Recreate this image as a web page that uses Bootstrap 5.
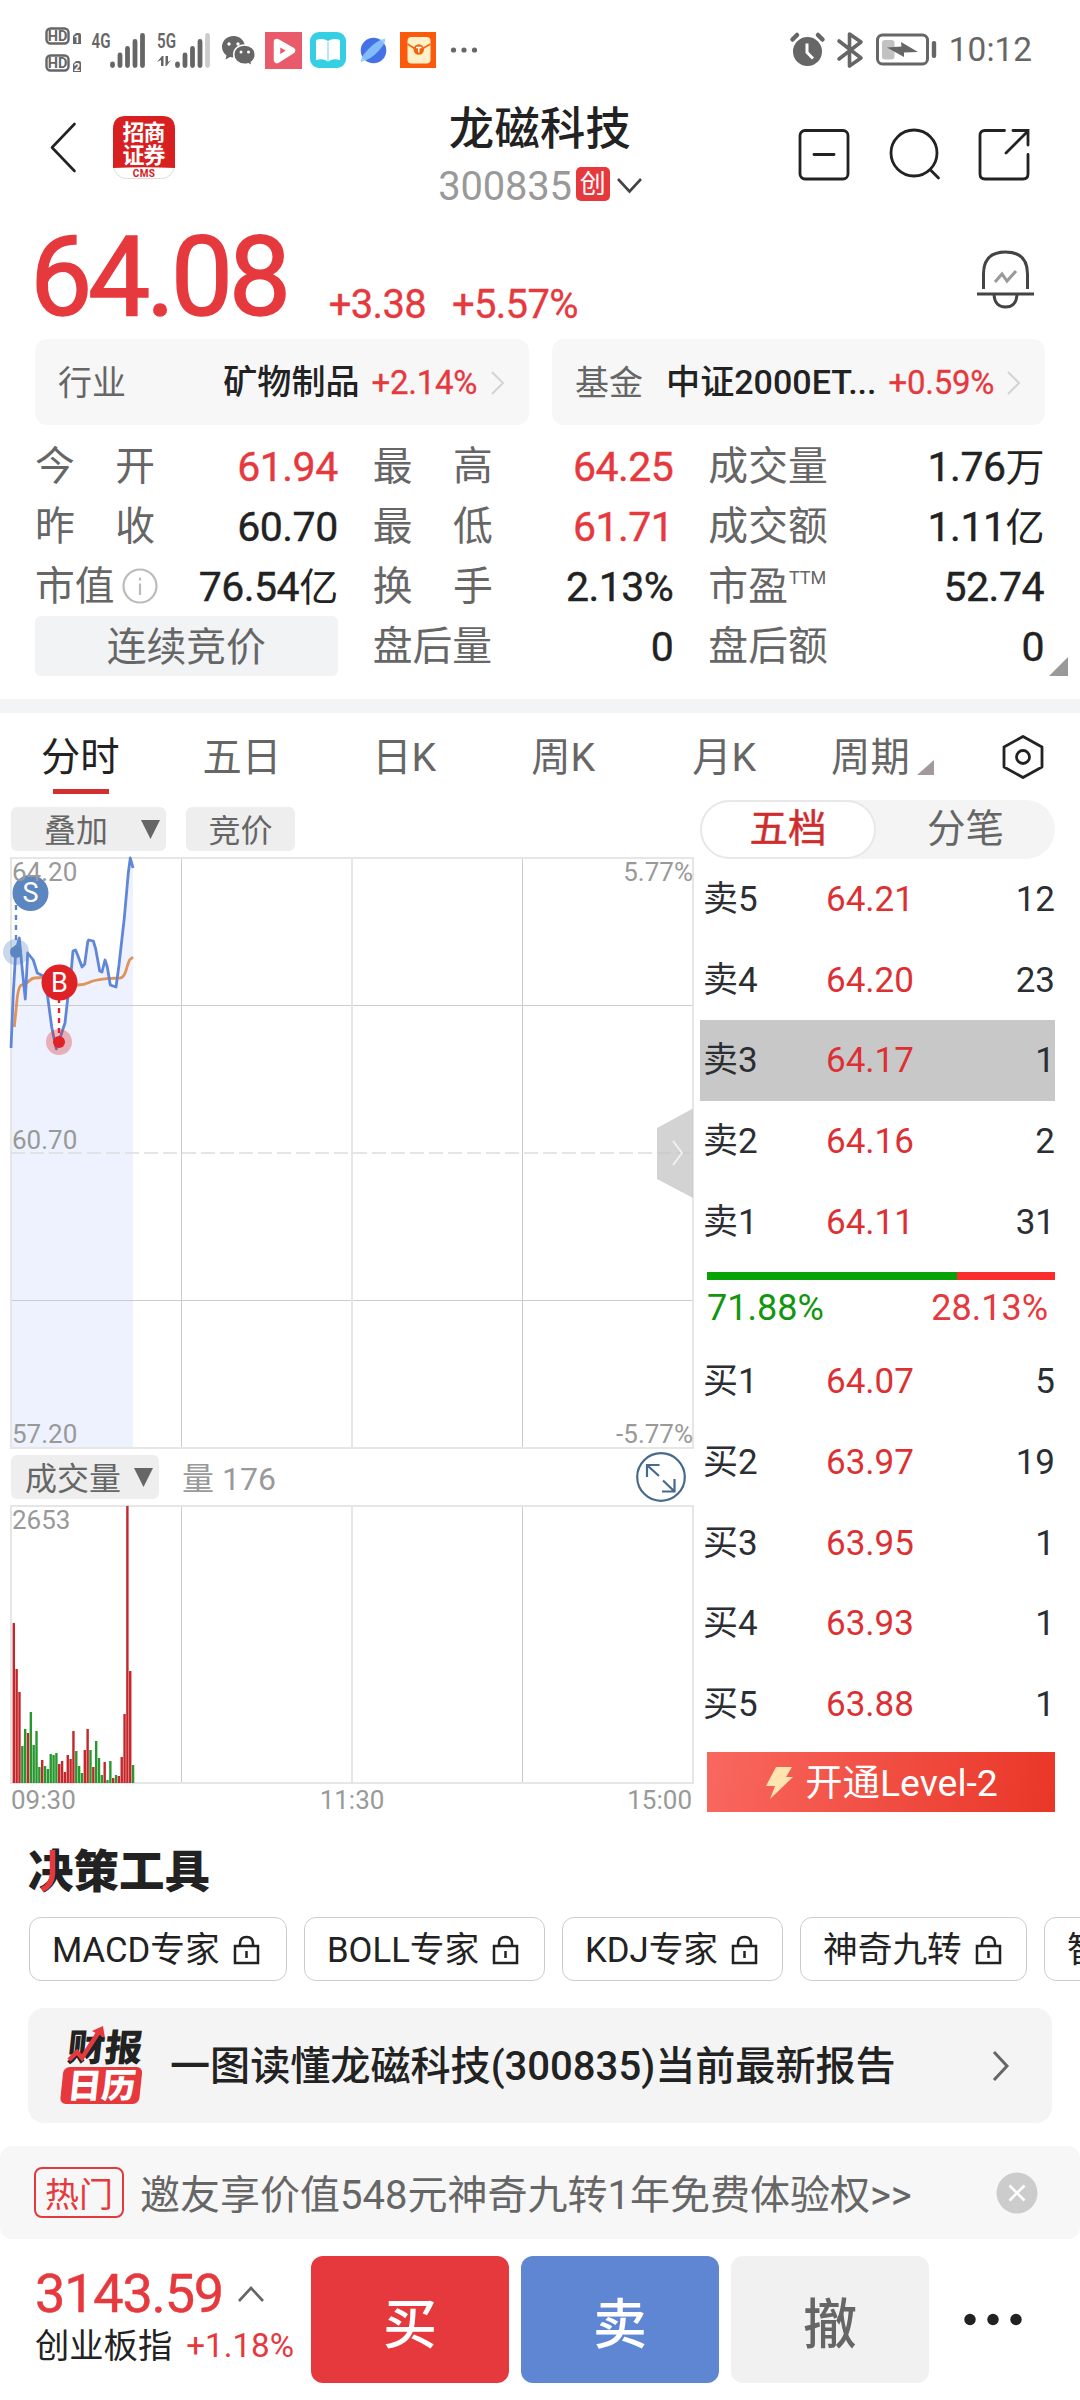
<!DOCTYPE html>
<html lang="zh-CN">
<head>
<meta charset="utf-8">
<meta name="viewport" content="width=device-width, initial-scale=1">
<title>龙磁科技 300835</title>
<link href="https://cdn.jsdelivr.net/npm/bootstrap@5.3.0/dist/css/bootstrap.min.css" rel="stylesheet">
<style>
:root{--up:#e6393e;--ink:#222;--soft:#666;--pale:#999}
body{width:1080px;height:2400px;overflow:hidden;background:#fff;color:var(--ink);font-family:Roboto,"Noto Sans CJK SC",sans-serif;line-height:1}
svg{display:block;flex:none;overflow:visible}
svg text{font-family:Roboto,"Noto Sans CJK SC",sans-serif}
.up{color:var(--up)}
.soft{color:var(--soft)}
.nw{white-space:nowrap}
.status{height:100px}
.clock{font-size:33.4px;color:#666;margin:0 48px 0 9px}
.head{height:120px;padding:0 50px 0 51px}
.head-left,.head-right{width:290px}
.stock-name{font-size:45.3px;font-weight:500;letter-spacing:.3px;height:59px;margin-left:-1px}
.stock-code{font-size:39.9px;color:var(--pale);letter-spacing:-.2px}
.board-tag{width:34px;height:34px;border-radius:5px;background:var(--up);color:#fff;font-size:26px;margin:-2px 6px 0 4px}
.quote{height:119px;padding:0 46px 0 30px}
.price{font-size:111px;font-weight:400;-webkit-text-stroke:1.4px var(--up);letter-spacing:-4.4px;line-height:80px;padding-top:17px}
.delta{font-size:40px;letter-spacing:-.7px;line-height:30px;-webkit-text-stroke:.3px var(--up);padding-top:70px}
.peer{height:86px;background:#f7f7f7;border-radius:12px;font-size:34px;padding:1px 23px 0}
.peer b{font-weight:500;font-size:34.1px}
.peer .pct{font-size:33px;letter-spacing:-.3px;-webkit-text-stroke:.3px var(--up)}
.facts{padding:11px 36px 0 35px;height:274px;gap:35px}
.facts .fcol1{width:303px}.facts .fcol2{width:301px}.facts .fcol3{width:336px}
.fact{height:60px;font-size:39.8px;padding-top:2px}
.fact .val{font-size:41px;letter-spacing:-.5px;-webkit-text-stroke:.4px currentColor}
.fact .val .cj{font-size:39px;-webkit-text-stroke:0}
.spread{width:120px}
.phase{height:60px;background:#f2f3f5;border-radius:6px;font-size:39.8px;color:var(--soft);padding-top:4px}
.gap-band{height:14px;background:#f3f4f6}
.periods{height:88px;font-size:39.3px;color:var(--soft);padding-left:41px}
.periods>span{padding-top:3px}
.periods .on{color:#222;position:relative}
.periods .on::after{content:"";position:absolute;left:12px;bottom:-16px;width:56px;height:5px;background:#d32f2f}
.tool{height:44px;background:#eee;border-radius:6px;font-size:32px;color:var(--soft)}
.tool span{padding-top:3px}
.left-col{width:694px;padding-left:11px}
.right-col{width:355px;margin-left:6px;margin-top:-1px}
.seg{height:59px;background:#f4f4f4;border-radius:30px;font-size:38.5px;color:var(--soft)}
.seg .seg-on{width:176px;height:59px;border:2px solid #e8e8e8;border-radius:30px;background:#fff;color:#d02c2c;-webkit-text-stroke:.5px #d02c2c}
.lvl{height:80.7px;font-size:35px;color:#2b2e33}
.lvl .who{width:123px;padding-left:3px;font-size:35px}
.lvl .at{flex:1;color:#dd3033;padding-left:3px}
.lvl.hit{background:#c8c8c8}
.bidask{height:8px;margin:10px 0 0 7px;background:#fb2c2c}
.bidask div{background:#06a206}
.pcts{font-size:36px;height:53px;padding:3px 7px 0}
.l2{height:60px;margin:7px 0 0 7px;gap:12px;padding:3px 0 0 2px;color:#fff;font-size:37.4px;background:linear-gradient(100deg,#f9685f,#e93627)}
.tools-title{font-size:45.5px;font-weight:900;height:104px;padding:16px 0 0 28px;position:relative}
.tools-title svg{position:absolute;left:39px;top:34px}
.expert{height:64px;border:1.5px solid #ccc;border-radius:12px;font-size:34.7px;padding:2px 25px 0 22px;gap:13px;flex:none}
.report{margin:27px 28px 0;height:115px;background:#f4f4f4;border-radius:16px;padding:0 42px 0 35px}
.report .ttl{font-size:40.1px;font-weight:500;margin-left:25px;padding-top:4px}
.promo{margin-top:23px;height:93px;background:#f7f7f7;border-radius:12px;padding:0 42px 0 34px}
.hot{width:90px;height:51px;border:2px solid var(--up);border-radius:8px;color:var(--up);font-size:34px;padding-top:4px}
.promo .msg{font-size:40px;color:var(--soft);margin-left:16px;padding-top:6px}
.dock{height:161px;padding:17px 35px 0}
.dock .idx{width:276px}
.idx .pts{font-size:54px;letter-spacing:-1.2px;line-height:54px;-webkit-text-stroke:.5px var(--up);padding-top:11px}
.idx .nm{font-size:34.3px;margin-top:8px;height:34px}
.trade{width:198px;height:127px;border-radius:12px;font-size:54px;font-weight:500;border:0;color:#fff;margin-right:12px;flex:none;padding:12px 0 0}
.trade.cancel{color:#666}
</style>
</head>
<body>
<div class="status d-flex align-items-start justify-content-between">
  <svg width="500" height="100" viewBox="0 0 500 100" fill="#666">
    <rect x="46.500" y="28.500" width="22" height="15" rx="4" fill="none" stroke="#666" stroke-width="2.400"/>
    <rect x="46.500" y="55.500" width="22" height="15" rx="4" fill="none" stroke="#666" stroke-width="2.400"/>
    <text x="57.500" y="41" font-size="14.500" font-weight="700" text-anchor="middle">HD</text>
    <text x="57.500" y="68" font-size="14.500" font-weight="700" text-anchor="middle">HD</text>
    <path d="M76 33h3q2 0 2 2v9h-8v-8z"/><path d="M76 61h3q2 0 2 2v9h-8v-8z"/>
    <text x="77" y="43" font-size="11" font-weight="700" fill="#fff" text-anchor="middle">1</text>
    <text x="77" y="71" font-size="11" font-weight="700" fill="#fff" text-anchor="middle">2</text>
    <text x="91.500" y="48" font-size="21" font-weight="600" textLength="19" lengthAdjust="spacingAndGlyphs">4G</text>
    <text x="157" y="48" font-size="21" font-weight="600" textLength="19" lengthAdjust="spacingAndGlyphs">5G</text>
    <g stroke="#666" stroke-width="4.800" stroke-linecap="round">
      <path d="M112.500 64v1.500M120 55V65.500M127.500 48.500V65.500M135 41.500V65.500M142.500 35.500V65.500"/>
      <path d="M177.500 64v1.500M185 55V65.500M192.500 48.500V65.500M200 41.500V65.500"/><path d="M207.500 35.500V65.500" stroke="#ccc"/>
    </g>
    <path d="M157 62l5-6h1.500v10h-2.500v-6zM171 60l-4.500 6h-1V56h2.500v6z"/>
    <path d="M233.500 36c-7 0-11.500 5-11.500 11 0 3.500 1.800 6.500 4.500 8.500l-1 4 4.500-2.500c1.200.3 2.300.5 3.500.5 7 0 11.500-5 11.500-10.500S240.500 36 233.500 36z"/>
    <path d="M244.500 45c-6.500 0-10.800 4.300-10.800 9.500s4.300 9.800 10.800 9.800c1.300 0 2.600-.2 3.800-.6l4 2.300-1-3.700c2.400-1.800 4-4.500 4-7.800 0-5.200-4.300-9.500-10.800-9.500z" stroke="#fff" stroke-width="1.500"/>
    <g fill="#fff"><circle cx="229" cy="44" r="1.700"/><circle cx="238" cy="44" r="1.700"/><circle cx="241" cy="52" r="1.500"/><circle cx="248.500" cy="52" r="1.500"/></g>
    <rect x="265" y="32" width="37" height="37" fill="#e95b6a"/>
    <path d="M277 42l15 8.500L277 60z" fill="#e95b6a" stroke="#fff" stroke-width="6.500" stroke-linejoin="round"/>
    <rect x="310" y="32" width="36" height="36" rx="9" fill="#35cfe3"/>
    <path d="M316 40q7-2.500 12 1 5-3.500 12-1v20q-7-2-12 1.500-5-3.500-12-1.500z" fill="#fff"/><path d="M328 42v19" stroke="#9be5ef" stroke-width="1.500"/>
    <circle cx="373.500" cy="50.500" r="12.800" fill="#4472e6"/>
    <path d="M361 62q-2-3 7-12.500T385 38.500q2 3-6 12T361 62z" fill="#8ec9fb" opacity=".85"/>
    <rect x="400" y="32" width="36" height="36" fill="#fb5a0d"/><rect x="407.500" y="37" width="23" height="26.500" rx="4" fill="#fff0c8"/>
    <path d="M407.500 44l11 7 12-7" fill="none" stroke="#f0690f" stroke-width="1.500"/><circle cx="418.800" cy="49.500" r="5.200" fill="#f0640d"/>
    <path d="M416 47.500h5.600M418.800 47.500v5" stroke="#fff" stroke-width="1.400"/>
    <circle cx="453.500" cy="50" r="2.600"/><circle cx="464" cy="50" r="2.600"/><circle cx="474.500" cy="50" r="2.600"/>
  </svg>
  <div class="d-flex align-items-center" style="height:100px">
    <svg width="150" height="100" viewBox="791 0 150 100" fill="#666">
      <circle cx="808.500" cy="51.500" r="14.500"/><path d="M808 43.500v9l6 6" fill="none" stroke="#fff" stroke-width="3"/>
      <path d="M793.500 39.500l4.500-4.500M823.500 39.500l-4.500-4.500" stroke="#666" stroke-width="4.500" stroke-linecap="round"/>
      <path d="M840 41l22 17-11.500 8V34l11.500 8-22 17" fill="none" stroke="#666" stroke-width="3.600" stroke-linejoin="round" stroke-linecap="round"/>
      <rect x="878.500" y="35" width="50" height="29" rx="5" fill="none" stroke="#666" stroke-width="3"/>
      <rect x="883" y="40" width="12.500" height="19.500" rx="3" fill="#c2c2c2"/>
      <path d="M888 47.500l14.500-1-.5-4.500 17 10-14 .5 0 4.500z"/><rect x="932.800" y="41" width="4.400" height="17" rx="2"/>
    </svg>
    <span class="clock">10:12</span>
  </div>
</div>

<header class="head d-flex justify-content-between">
  <div class="head-left d-flex pt-3">
    <svg width="26" height="62" viewBox="51 116 26 62"><path d="M74.500 124L52 147.500 74.500 171" fill="none" stroke="#222" stroke-width="2.600" stroke-linecap="round" stroke-linejoin="round"/></svg>
    <svg style="margin-left:36px" width="62" height="63" viewBox="0 0 62 63">
      <rect x=".5" y=".5" width="61" height="62" rx="13" fill="#fff" stroke="#ddd"/><path d="M0 52V13Q0 0 13 0h36q13 0 13 13v39q-31-1.500-62 0z" fill="#d7201f"/>
      <g fill="#fff" font-size="22" font-weight="700" text-anchor="middle"><text x="31" y="24" textLength="43">招商</text><text x="31" y="46.500" textLength="43">证券</text></g>
      <text x="31" y="61" font-size="10" font-weight="700" text-anchor="middle" fill="#d7201f" letter-spacing=".3">CMS</text>
    </svg>
  </div>
  <div class="d-flex flex-column align-items-center nw">
    <div class="stock-name d-flex align-items-center">龙磁科技</div>
    <div class="d-flex align-items-center" style="height:51px">
      <span class="stock-code pt-1">300835</span>
      <span class="board-tag d-flex align-items-center justify-content-center">创</span>
      <svg width="27" height="18" viewBox="0 0 27 18"><path d="M2 3l11.500 12.500L25 3" fill="none" stroke="#444" stroke-width="2.600"/></svg>
    </div>
  </div>
  <div class="head-right d-flex justify-content-end" style="padding-top:28px;gap:37px">
    <svg width="52" height="54" viewBox="0 0 52 54" fill="none" stroke="#222" stroke-width="2.800" stroke-linecap="round"><rect x="2" y="2.500" width="48" height="48.500" rx="5"/><path d="M16 26.500h20"/></svg>
    <svg style="margin-left:2px" width="52" height="54" viewBox="0 0 52 54" fill="none" stroke="#222" stroke-width="2.800" stroke-linecap="round"><circle cx="25" cy="25" r="23"/><path d="M41.500 42l8 8"/></svg>
    <svg width="52" height="54" viewBox="0 0 52 54" fill="none" stroke="#222" stroke-width="2.800" stroke-linecap="round"><path d="M26.500 2.500H7q-5 0-5 5V46q0 5 5 5h38q5 0 5-5V26.500M35 2.500h15V17M49 4L28 25"/></svg>
  </div>
</header>

<section class="quote d-flex align-items-start">
  <span class="price up">64.08</span>
  <span class="delta up nw" style="margin-left:42px">+3.38</span>
  <span class="delta up nw" style="margin-left:26px">+5.57%</span>
  <svg class="ms-auto" style="margin-top:30px" width="58" height="60" viewBox="0 0 58 60" fill="none" stroke="#444" stroke-width="3"><path d="M7.500 39V24Q7.500 2 29.500 2t22 22v15M1 44h57"/><path d="M18 45q1 12 11.500 12T41 45"/><path d="M19 32l7-8 5 7 9-10" stroke="#999"/></svg>
</section>

<div class="d-flex" style="padding:0 35px;gap:23px">
  <div class="peer d-flex align-items-center flex-fill nw" style="width:494px">
    <span class="soft">行业</span><b class="ms-auto">矿物制品</b><span class="pct up" style="margin:0 13px 0 12px">+2.14%</span>
    <svg width="16" height="26" viewBox="0 0 16 26"><path d="M2 2l11 11L2 24" fill="none" stroke="#d4d4d4" stroke-width="2"/></svg>
  </div>
  <div class="peer d-flex align-items-center flex-fill nw" style="width:493px">
    <span class="soft">基金</span><b class="ms-auto">中证2000ET...</b><span class="pct up" style="margin:0 12px 0 12px">+0.59%</span>
    <svg width="16" height="26" viewBox="0 0 16 26"><path d="M2 2l11 11L2 24" fill="none" stroke="#d4d4d4" stroke-width="2"/></svg>
  </div>
</div>

<section class="facts d-flex position-relative nw">
  <div class="fcol1">
    <div class="fact d-flex align-items-center justify-content-between"><span class="soft spread d-flex justify-content-between"><i class="fst-normal">今</i><i class="fst-normal">开</i></span><span class="val up">61.94</span></div>
    <div class="fact d-flex align-items-center justify-content-between"><span class="soft spread d-flex justify-content-between"><i class="fst-normal">昨</i><i class="fst-normal">收</i></span><span class="val">60.70</span></div>
    <div class="fact d-flex align-items-center"><span class="soft">市值</span>
      <svg style="margin-left:7px" width="36" height="36" viewBox="0 0 36 36" fill="none" stroke="#bbb" stroke-width="2.200"><circle cx="18" cy="17" r="16.500"/><path d="M18 14.500V26M18 8.500v3"/></svg>
      <span class="val ms-auto">76.54<span class="cj">亿</span></span></div>
    <div class="phase d-flex align-items-center justify-content-center">连续竞价</div>
  </div>
  <div class="fcol2">
    <div class="fact d-flex align-items-center justify-content-between"><span class="soft spread d-flex justify-content-between"><i class="fst-normal">最</i><i class="fst-normal">高</i></span><span class="val up">64.25</span></div>
    <div class="fact d-flex align-items-center justify-content-between"><span class="soft spread d-flex justify-content-between"><i class="fst-normal">最</i><i class="fst-normal">低</i></span><span class="val up">61.71</span></div>
    <div class="fact d-flex align-items-center justify-content-between"><span class="soft spread d-flex justify-content-between"><i class="fst-normal">换</i><i class="fst-normal">手</i></span><span class="val">2.13%</span></div>
    <div class="fact d-flex align-items-center justify-content-between"><span class="soft">盘后量</span><span class="val">0</span></div>
  </div>
  <div class="fcol3">
    <div class="fact d-flex align-items-center justify-content-between"><span class="soft">成交量</span><span class="val">1.76<span class="cj">万</span></span></div>
    <div class="fact d-flex align-items-center justify-content-between"><span class="soft">成交额</span><span class="val">1.11<span class="cj">亿</span></span></div>
    <div class="fact d-flex align-items-center justify-content-between"><span class="soft d-flex">市盈<span style="font-size:18px;padding-top:2px;margin-left:1px">TTM</span></span><span class="val">52.74</span></div>
    <div class="fact d-flex align-items-center justify-content-between"><span class="soft">盘后额</span><span class="val">0</span></div>
  </div>
  <svg class="position-absolute" style="right:12px;bottom:23px" width="19" height="19" viewBox="0 0 19 19"><path d="M0 19L19 0v19z" fill="#999"/></svg>
</section>
<div class="gap-band"></div>

<nav class="periods d-flex align-items-center nw">
  <span class="on">分时</span><span style="margin-left:83px">五日</span><span style="margin-left:91px">日K</span><span style="margin-left:95px">周K</span><span style="margin-left:97px">月K</span>
  <span class="d-flex align-items-end" style="margin-left:75px">周期<svg style="margin:0 0 3px 7px" width="17" height="15" viewBox="0 0 17 15"><path d="M0 15L17 0v15z" fill="#a09a9a"/></svg></span>
  <svg class="ms-auto" style="margin-right:36px" width="42" height="46" viewBox="0 0 42 46" fill="none" stroke="#222" stroke-width="2.800" stroke-linejoin="round"><path d="M21 2.500l19 10.500v20L21 43.500 2 33V13z"/><circle cx="21" cy="23" r="6.500"/></svg>
</nav>

<main class="d-flex">
  <div class="left-col">
    <div class="d-flex" style="padding-top:6px;height:56px;gap:20px">
      <div class="tool d-flex align-items-center justify-content-between" style="width:155px;padding:0 6px 0 33px"><span>叠加</span><svg width="19" height="19" viewBox="0 0 19 19"><path d="M0 0h19l-9.500 19z" fill="#666"/></svg></div>
      <div class="tool d-flex align-items-center justify-content-center" style="width:109px"><span>竞价</span></div>
    </div>
    <svg width="694" height="592" viewBox="0 857 694 592" style="margin-left:-11px">
      <path d="M11 1048L13.300 993 15.700 952 19.300 938 22 967 25.300 999 27.700 953 33.300 960 37.300 973 43.300 976 47.700 997 51.700 1027 56.300 1049 65 1023 68.300 993 71 973 73 951 78 956 82 967 84.700 964 87.700 942 93.300 941 95.700 949 99.700 971 102 972 105 960 107.300 967 110.300 985 116 987 119 965 124.300 918 128.300 873 130.300 858 133 868V1448H11z" fill="#edf2fe"/>
      <g fill="none" stroke-width="1" stroke="#ccc"><path d="M181.500 858v590M522.500 858v590M11 1005.500h682M11 1300.500h682"/><path d="M352 858v590M11 858h682v590H11z" stroke="#e6e6e6" stroke-width="2"/><path d="M11 1153h682" stroke="#ddd" stroke-width="1.600" stroke-dasharray="14 5"/></g>
      <path d="M14.300 1027l2.400-24q1.300-15 4-17.500l6.600-3q4-4 7-4.500l9-.500Q55 981 62 985h16q6 0 11-2.500t18-3.800l13-.700q4-.500 6-7.500t3.500-10.500l3.500-3" fill="none" stroke="#e0935a" stroke-width="2.800"/>
      <path d="M11 1048L13.300 993 15.700 952 19.300 938 22 967 25.300 999 27.700 953 33.300 960 37.300 973 43.300 976 47.700 997 51.700 1027 56.300 1049 65 1023 68.300 993 71 973 73 951 75.500 950 78 956 82 967 84.700 964 87.700 942 88.700 940 93.300 941 95.700 949 99.700 971 102 972 105 960 107.300 967 110.300 985 116 987 119 965 124.300 918 128.300 873 130.300 858 133 868" fill="none" stroke="#5f86d8" stroke-width="2.800" stroke-linejoin="round"/>
      <path d="M16 905v45" stroke="#5b86c0" stroke-width="2.400" stroke-dasharray="5 5"/>
      <circle cx="16" cy="952" r="13" fill="#5b86c0" opacity=".32"/><circle cx="16" cy="952" r="6" fill="#5b86c0"/>
      <circle cx="30.500" cy="893" r="18" fill="#5b86c0"/><text x="30.500" y="902" font-size="27" fill="#fff" text-anchor="middle">S</text>
      <path d="M59 998v44" stroke="#de2226" stroke-width="2.400" stroke-dasharray="5 5"/>
      <circle cx="59" cy="1042" r="13" fill="#de2226" opacity=".32"/><circle cx="59" cy="1042" r="6" fill="#de2226"/>
      <circle cx="59.500" cy="982.500" r="18" fill="#de2226"/><text x="59.500" y="992" font-size="27" fill="#fff" text-anchor="middle">B</text>
      <g font-size="26" fill="#999"><text x="12" y="881">64.20</text><text x="12" y="1148.500">60.70</text><text x="12" y="1443">57.20</text><text x="693" y="881" text-anchor="end">5.77%</text><text x="693" y="1443" text-anchor="end">-5.77%</text></g>
      <path d="M693 1108.500L657 1128v51l36 19z" fill="#c4c4c4" opacity=".75"/><path d="M673 1141l9 12-9 12" fill="none" stroke="#f2f2f2" stroke-width="1.800"/>
    </svg>
    <div class="d-flex align-items-center" style="height:56px">
      <div class="tool d-flex align-items-center justify-content-between" style="width:148px;padding:0 6px 0 14px"><span>成交量</span><svg width="19" height="19" viewBox="0 0 19 19"><path d="M0 0h19l-9.500 19z" fill="#666"/></svg></div>
      <span style="font-size:32px;color:#999;margin-left:23px;padding-top:3px">量 176</span>
      <svg class="ms-auto" style="margin-right:8px" width="50" height="50" viewBox="0 0 50 50" fill="none" stroke="#47698c" stroke-width="2.200"><circle cx="25" cy="25" r="23.800"/><path d="M23 24L11.500 13.500M11 25V13h12.500M27 28.500L38 39M38.500 27v12.500H26"/></svg>
    </div>
    <svg width="694" height="308" viewBox="0 1505 694 308" style="margin-left:-11px">
      <g fill="none" stroke-width="1" stroke="#ccc"><path d="M181.500 1506v277M522.500 1506v277"/><path d="M352 1506v277M11 1506h682v277H11z" stroke="#e6e6e6" stroke-width="2"/></g>
      <g id="volume"></g>
      <g font-size="26" fill="#999"><text x="12" y="1529">2653</text><text x="11" y="1808.500">09:30</text><text x="352" y="1808.500" text-anchor="middle">11:30</text><text x="692" y="1808.500" text-anchor="end">15:00</text></g>
    </svg>
  </div>
  <div class="right-col nw">
    <div class="seg d-flex align-items-center"><span class="seg-on d-flex align-items-center justify-content-center">五档</span><span class="flex-fill text-center">分笔</span></div>
    <div class="lvl d-flex align-items-center"><span class="who">卖5</span><span class="at">64.21</span><span>12</span></div>
    <div class="lvl d-flex align-items-center"><span class="who">卖4</span><span class="at">64.20</span><span>23</span></div>
    <div class="lvl hit d-flex align-items-center"><span class="who">卖3</span><span class="at">64.17</span><span>1</span></div>
    <div class="lvl d-flex align-items-center"><span class="who">卖2</span><span class="at">64.16</span><span>2</span></div>
    <div class="lvl d-flex align-items-center"><span class="who">卖1</span><span class="at">64.11</span><span>31</span></div>
    <div class="bidask d-flex"><div style="width:71.88%"></div></div>
    <div class="pcts d-flex align-items-center justify-content-between"><span style="color:#12960f">71.88%</span><span class="up">28.13%</span></div>
    <div style="padding-top:8px">
    <div class="lvl d-flex align-items-center"><span class="who">买1</span><span class="at">64.07</span><span>5</span></div>
    <div class="lvl d-flex align-items-center"><span class="who">买2</span><span class="at">63.97</span><span>19</span></div>
    <div class="lvl d-flex align-items-center"><span class="who">买3</span><span class="at">63.95</span><span>1</span></div>
    <div class="lvl d-flex align-items-center"><span class="who">买4</span><span class="at">63.93</span><span>1</span></div>
    <div class="lvl d-flex align-items-center"><span class="who">买5</span><span class="at">63.88</span><span>1</span></div>
    </div>
    <div class="l2 d-flex align-items-center justify-content-center">
      <svg width="27" height="32" viewBox="0 0 27 32"><path d="M10 0h16l-6 10h7L4 32l5-13H0z" fill="#ffe3b0"/></svg>开通Level-2
    </div>
  </div>
</main>

<section>
  <div class="tools-title d-flex align-items-center">决策工具<svg width="24" height="50" viewBox="0 0 24 50"><path d="M13.500 3v24Q13 38 3 43" fill="none" stroke="#e6393e" stroke-width="5.500"/></svg></div>
  <div class="d-flex nw overflow-hidden" id="experts" style="padding-left:29px;gap:17px">
    <div class="expert d-flex align-items-center" style="width:258px">MACD专家<svg width="27" height="30"><use href="#lock"/></svg></div>
    <div class="expert d-flex align-items-center" style="width:241px">BOLL专家<svg width="27" height="30"><use href="#lock"/></svg></div>
    <div class="expert d-flex align-items-center" style="width:221px">KDJ专家<svg width="27" height="30"><use href="#lock"/></svg></div>
    <div class="expert d-flex align-items-center" style="width:227px">神奇九转<svg width="27" height="30"><use href="#lock"/></svg></div>
    <div class="expert d-flex align-items-center" style="width:227px">智能选股</div>
  </div>
  <svg class="d-none"><symbol id="lock" viewBox="0 0 27 30"><path d="M2 11h23v17H2zM7 11V8.500Q7 2 13.500 2T20 8.500V11M13.500 16v7" fill="none" stroke="#222" stroke-width="2.500"/></symbol></svg>
  <div class="report d-flex align-items-center nw">
    <svg width="82" height="80" viewBox="0 0 82 80">
      <g transform="skewX(-6)" font-weight="900"><text x="7" y="35" font-size="37" textLength="75" lengthAdjust="spacingAndGlyphs" fill="#222">财报</text>
      <rect x="5" y="41" width="79" height="37" rx="6" fill="#e6393e"/><text x="11" y="72" font-size="34" textLength="68" lengthAdjust="spacingAndGlyphs" fill="#fff">日历</text></g>
      <path d="M6 34l8-8 5 6L37 4" fill="none" stroke="#e6393e" stroke-width="4.500"/><path d="M29 5l11-5 2 12z" fill="#e6393e"/>
    </svg>
    <span class="ttl">一图读懂龙磁科技(300835)当前最新报告</span>
    <svg class="ms-auto" width="18" height="32" viewBox="0 0 18 32"><path d="M2 2l13 14L2 30" fill="none" stroke="#666" stroke-width="3"/></svg>
  </div>
  <div class="promo d-flex align-items-center nw">
    <span class="hot d-flex align-items-center justify-content-center">热门</span><span class="msg">邀友享价值548元神奇九转1年免费体验权&gt;&gt;</span>
    <svg class="ms-auto" width="42" height="42" viewBox="0 0 42 42"><circle cx="21" cy="21" r="20.500" fill="#ccc"/><path d="M13.500 13.500l15 15M28.500 13.500l-15 15" stroke="#fff" stroke-width="2.600"/></svg>
  </div>
</section>

<footer class="dock d-flex align-items-start nw">
  <div class="idx">
    <div class="d-flex align-items-center up pts">3143.59<svg style="margin-left:14px" width="28" height="18" viewBox="0 0 28 18"><path d="M2 16L14 3l12 13" fill="none" stroke="#666" stroke-width="2.600"/></svg></div>
    <div class="d-flex align-items-center nm">创业板指<span class="up" style="font-size:33.2px;margin-left:14px">+1.18%</span></div>
  </div>
  <button class="btn trade" style="background:#e6393e">买</button>
  <button class="btn trade" style="background:#5f86d3">卖</button>
  <button class="btn trade cancel" style="background:#f1f1f1">撤</button>
  <svg style="margin:57px 0 0 22px" width="60" height="14" viewBox="0 0 60 14" fill="#222"><circle cx="7" cy="6.500" r="5.700"/><circle cx="30" cy="6.500" r="5.700"/><circle cx="53" cy="6.500" r="5.700"/></svg>
</footer>

<script src="https://cdn.jsdelivr.net/npm/bootstrap@5.3.0/dist/js/bootstrap.bundle.min.js"></script>
<script>
// one bar per minute: height in px, r = rising, g = falling
const bars = "160r 114r 91r 37g 54g 50r 71g 38g 52g 16g 23r 17g 14g 29g 28g 30g 19r 22r 11r 28r 24r 52r 32g 17g 10g 33r 54r 33g 16r 42g 25g 8g 21r 3g 22g 5r 8g 7r 26r 69r 277r 112r 18g".split(" ");
const g = document.getElementById("volume");
bars.forEach((b, i) => {
  const h = parseInt(b, 10), r = document.createElementNS("http://www.w3.org/2000/svg", "rect");
  r.setAttribute("x", (12.6 + i * 2.84).toFixed(2));
  r.setAttribute("y", 1783 - h);
  r.setAttribute("width", 2.4);
  r.setAttribute("height", h);
  r.setAttribute("fill", b.endsWith("r") ? "#c5262a" : "#26982f");
  g.appendChild(r);
});
</script>
</body>
</html>
